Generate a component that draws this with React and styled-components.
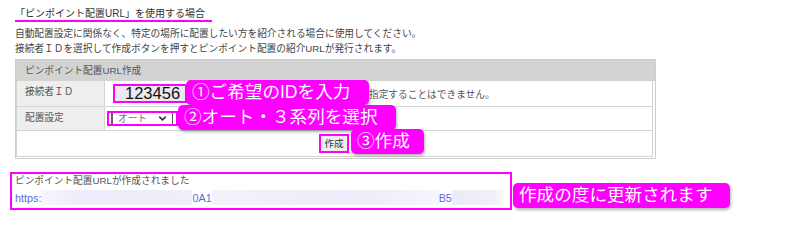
import styled, { createGlobalStyle } from "styled-components";
import { ChevronDown } from "lucide-react";

const MAGENTA = "#ff00ff";
const LINE = "#d4d4d4";

const Global = createGlobalStyle`
  body { margin: 0; background: #fff; }
  * { box-sizing: border-box; }
`;

const Page = styled.div`
  width: 795px; height: 228px; padding: 8px 0 0 10px; overflow: hidden;
  font-family: "Liberation Sans", "Noto Sans CJK JP", sans-serif;
  font-size: 9.7px; color: #444;
`;
const Intro = styled.div`padding-left: 5px;`;
const Title = styled.div`
  display: inline-block; font-size: 10px; line-height: 12px; color: #333;
  padding-right: 7px; border-bottom: 2px solid ${MAGENTA};
`;
const Desc = styled.div`margin-top: 4px; line-height: 15px;`;

const Panel = styled.div`
  position: relative; width: 641px; margin: 3px 0 0 5px;
  border: 1px solid #cdcdcd;
`;
const PanelHead = styled.div`
  height: 21px; line-height: 21px; padding-left: 9px;
  background: #d3d3d3; color: #555;
`;
const Rows = styled.div`
  display: grid; grid-template-columns: 88px 1fr;
  margin: 0 2px 1px 0; border-left: 1px solid ${LINE};
`;
const Label = styled.div`
  height: ${({ $h }) => $h}px; padding: 4px 0 0 8px; line-height: 14px;
  background: #eee; color: #555;
  border-right: 1px solid ${LINE}; border-bottom: 1px solid ${LINE};
`;
const Value = styled.div`
  height: ${({ $h }) => $h}px; display: flex; align-items: center;
  justify-content: ${({ $center }) => ($center ? "center" : "flex-start")};
  padding-left: ${({ $pad = 0 }) => $pad}px;
  grid-column: ${({ $span }) => ($span ? "1 / -1" : "auto")};
  border-right: 1px solid ${LINE}; border-bottom: 1px solid ${LINE};
`;
const IdInput = styled.input`
  width: 74px; height: 19px; padding: 0 0 0 10px; margin: 0;
  border: 2px solid ${MAGENTA}; background: #e9e9ef; outline: none;
  font: 16.5px "Liberation Sans", sans-serif; color: #111;
`;
const Note = styled.span`margin-left: 182px; color: #555; white-space: nowrap;`;
const SelectRing = styled.div`
  display: flex; width: 71px; height: 15px; margin-left: 1px;
  border: 2px solid ${MAGENTA}; padding: 0 3px 0 2px; background: #fff;
`;
const SelectBox = styled.div`
  flex: 1; display: flex; align-items: center; justify-content: space-between;
  padding: 0 4px 0 5px; color: #777; line-height: 11px;
  border-left: 2px solid #666; border-right: 1px solid #555;
  svg { color: #333; }
`;
const MakeBtn = styled.button`
  width: 30px; height: 19px; padding: 0; margin: 0 0 0 -1px;
  border: 2px solid ${MAGENTA}; background: #eee; color: #333;
  font: 9.5px "Noto Sans CJK JP", sans-serif; line-height: 13px;
`;

const Bubble = styled.div`
  width: ${({ $w }) => $w}px; height: 25px; padding-left: 6px;
  background: ${MAGENTA}; color: #fff; border-radius: 5px;
  font: 17.6px "Liberation Sans", "Noto Sans CJK JP", sans-serif; line-height: 25px;
  white-space: nowrap; box-shadow: 1px 2px 3px rgba(0, 0, 0, 0.3);
`;
const Pin = styled(Bubble)`
  position: absolute; left: ${({ $x }) => $x}px; top: ${({ $y }) => $y}px;
`;

const ResultRow = styled.div`display: flex; align-items: flex-end; margin-top: 13px;`;
const ResultBox = styled.div`
  width: 502px; height: 38px; padding-left: 3px;
  border: 2px solid ${MAGENTA};
`;
const ResultMsg = styled.div`line-height: 14px; color: #555;`;
const UrlLine = styled.div`
  display: flex; align-items: center; height: 15px; margin-top: 2px;
  font-size: 10.8px; color: #5b6be0; white-space: nowrap;
`;
const Mask = styled.span`
  display: inline-block; flex: none; width: ${({ $w }) => $w}px; height: 15px;
  background: ${({ $bg }) => $bg};
`;
const ResultBubble = styled(Bubble)`margin: 0 0 2px 1px;`;

export default function App() {
  return (
    <>
      <Global />
      <Page>
        <Intro>
          <Title>「ピンポイント配置URL」を使用する場合</Title>
          <Desc>
            <div>自動配置設定に関係なく、特定の場所に配置したい方を紹介される場合に使用してください。</div>
            <div>接続者ＩＤを選択して作成ボタンを押すとピンポイント配置の紹介URLが発行されます。</div>
          </Desc>
        </Intro>

        <Panel>
          <PanelHead>ピンポイント配置URL作成</PanelHead>
          <Rows>
            <Label $h={26}>接続者ＩＤ</Label>
            <Value $h={26} $pad={8}>
              <IdInput readOnly value="123456" />
              <Note>指定することはできません。</Note>
            </Value>
            <Label $h={24}>配置設定</Label>
            <Value $h={24} $pad={1}>
              <SelectRing>
                <SelectBox>
                  オート
                  <ChevronDown size={11} strokeWidth={3.5} />
                </SelectBox>
              </SelectRing>
            </Value>
            <Value $h={26} $span $center>
              <MakeBtn>作成</MakeBtn>
            </Value>
          </Rows>

          <Pin $x={170} $y={20} $w={183}>①ご希望のIDを入力</Pin>
          <Pin $x={162} $y={45} $w={218}>②オート・３系列を選択</Pin>
          <Pin $x={335} $y={69} $w={73}>③作成</Pin>
        </Panel>

        <ResultRow>
          <ResultBox>
            <ResultMsg>ピンポイント配置URLが作成されました</ResultMsg>
            <UrlLine>
              https:
              <Mask $w={151} $bg="linear-gradient(90deg, #f6f6fd, #ececfa 30%, #efeffb)" />
              0A1
              <Mask $w={227} $bg="linear-gradient(90deg, #f3f3fc, #ececfa 60%, #f5f5fc)" />
              B5
              <Mask $w={52} $bg="linear-gradient(90deg, #ebebf9, #f0f0fb 80%, #fafafe)" />
            </UrlLine>
          </ResultBox>
          <ResultBubble $w={217}>作成の度に更新されます</ResultBubble>
        </ResultRow>
      </Page>
    </>
  );
}
